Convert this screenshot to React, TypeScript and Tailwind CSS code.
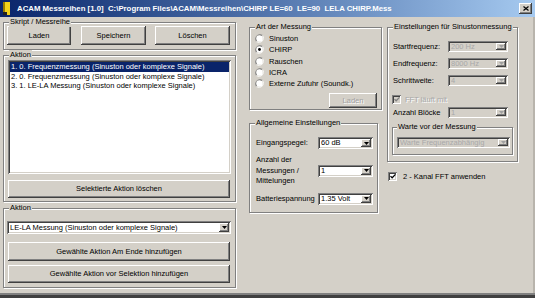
import React from "react";

const raised =
  "bg-[#d4d0c8] shadow-[inset_-1px_-1px_0_#404040,inset_1px_1px_0_#ffffff,inset_-2px_-2px_0_#808080]";
const sunken =
  "shadow-[inset_1px_1px_0_#808080,inset_-1px_-1px_0_#ffffff,inset_2px_2px_0_#404040,inset_-2px_-2px_0_#d4d0c8]";

function Btn({ label, className, disabled }: { label: string; className: string; disabled?: boolean }) {
  return (
    <div
      className={`${raised} flex items-center justify-center shrink-0 ${
        disabled ? "text-[#a0a0a0] [text-shadow:1px_1px_0_#fff]" : "text-black"
      } ${className}`}
    >
      {label}
    </div>
  );
}

function Group({
  label,
  className,
  children,
  labelLeft = "left-[5px]",
}: {
  label: string;
  className: string;
  children?: React.ReactNode;
  labelLeft?: string;
}) {
  return (
    <div
      className={`relative shrink-0 border border-[#808080] shadow-[inset_1px_1px_0_#ffffff,1px_1px_0_#ffffff] ${className}`}
    >
      <span className={`absolute ${labelLeft} top-[-6px] bg-[#d4d0c8] px-[1px] leading-[10px] whitespace-nowrap`}>
        {label}
      </span>
      {children}
    </div>
  );
}

function Arrow({ disabled }: { disabled?: boolean }) {
  return (
    <svg width="5" height="3" viewBox="0 0 5 3">
      <path d="M0 0h5L2.5 3z" fill={disabled ? "#a0a0a0" : "#000"} />
    </svg>
  );
}

function Combo({
  value,
  className,
  disabled,
}: {
  value: string;
  className: string;
  disabled?: boolean;
}) {
  return (
    <div
      className={`${sunken} shrink-0 flex items-center pl-[3px] pr-[2px] ${
        disabled ? "bg-[#d4d0c8] text-[#a8a8a8]" : "bg-white text-black"
      } ${className}`}
    >
      <span className="flex-1 whitespace-nowrap overflow-hidden leading-[10px]">{value}</span>
      <div className={`${raised} w-[10px] h-[calc(100%-4px)] flex items-center justify-center shrink-0`}>
        <Arrow disabled={disabled} />
      </div>
    </div>
  );
}

function Radio({ checked }: { checked?: boolean }) {
  return (
    <svg width="9" height="9" viewBox="0 0 12 12" className="shrink-0">
      <path d="M10.2 1.8A6 6 0 0 0 1.8 10.2" fill="none" stroke="#808080" strokeWidth="1" />
      <path d="M9.4 2.6A4.9 4.9 0 0 0 2.6 9.4" fill="none" stroke="#404040" strokeWidth="1" />
      <path d="M1.8 10.2A6 6 0 0 0 10.2 1.8" fill="none" stroke="#ffffff" strokeWidth="1" />
      <circle cx="6" cy="6" r="4.3" fill="#fff" />
      {checked && <circle cx="6" cy="6" r="1.9" fill="#000" />}
    </svg>
  );
}

function Check({ disabled }: { disabled?: boolean }) {
  return (
    <div
      className={`${sunken} w-[9px] h-[9px] shrink-0 flex items-center justify-center ${
        disabled ? "bg-[#d4d0c8]" : "bg-white"
      }`}
    >
      <svg width="6" height="5" viewBox="0 0 7 6">
        <path d="M0.5 2.5l2 2 4-4" fill="none" stroke={disabled ? "#808080" : "#000"} strokeWidth="1.5" />
      </svg>
    </div>
  );
}

export default function App() {
  const rows = [
    "1. 0. Frequenzmessung (Sinuston oder komplexe Signale)",
    "2. 0. Frequenzmessung (Sinuston oder komplexe Signale)",
    "3. 1. LE-LA Messung (Sinuston oder komplexe Signale)",
  ];
  return (
    <div className="w-[535px] h-[298px] overflow-hidden bg-[#d4d0c8] font-['Liberation_Sans',Arial,sans-serif] text-[7.5px] text-black flex flex-col">
      {/* Title bar */}
      <div className="h-[17px] shrink-0 flex items-center bg-gradient-to-r from-[#0a246a] to-[#a6caf0] pl-[3px] pr-[3px]">
        <svg width="8" height="13" viewBox="0 0 8 13" className="shrink-0">
          <rect x="0" y="0" width="7" height="13" fill="#f2d21a" />
          <rect x="0" y="0" width="2" height="13" fill="#9a7d00" />
          <rect x="0" y="10" width="4" height="3" fill="#222" />
        </svg>
        <span className="ml-[6px] text-white font-bold text-[7.8px] whitespace-nowrap leading-[10px] flex-1">
          ACAM Messreihen [1.0]&nbsp; C:\Program Files\ACAM\Messreihen\CHIRP LE=60&nbsp; LE=90&nbsp; LELA CHIRP.Mess
        </span>
        <div className={`${raised} w-[13px] h-[11px] flex items-center justify-center shrink-0`}>
          <svg width="6" height="5" viewBox="0 0 6 5">
            <path d="M0.5 0.5l5 4M5.5 0.5l-5 4" stroke="#000" strokeWidth="1.2" />
          </svg>
        </div>
      </div>

      {/* Body */}
      <div className="flex-1 flex flex-row border-b-[2px] border-b-[#808080] shadow-[inset_-2px_0_0_#b8b4ac]">
        {/* Left column */}
        <div className="ml-[3px] w-[233px] flex flex-col shrink-0">
          <Group label="Skript / Messreihe" className="mt-[5px] h-[28px]">
            <div className="flex flex-row pt-[3px] pl-[3px]">
              <Btn label="Laden" className="w-[64px] h-[19px]" />
              <Btn label="Speichern" className="ml-[10px] w-[65px] h-[19px]" />
              <Btn label="Löschen" className="ml-[9px] w-[75px] h-[19px]" />
            </div>
          </Group>

          <Group label="Aktion" className="mt-[5px] h-[147px]">
            <div className="flex flex-col pl-[4px] pt-[4px]">
              <div className={`${sunken} bg-white w-[223px] h-[114px] p-[2px]`}>
                {rows.map((r, i) => (
                  <div
                    key={i}
                    className={`h-[9.5px] leading-[9.5px] pl-[1px] whitespace-nowrap ${
                      i === 0 ? "bg-[#0a246a] text-white" : "text-black"
                    }`}
                  >
                    {r}
                  </div>
                ))}
              </div>
              <Btn label="Selektierte Aktion löschen" className="mt-[6px] w-[222px] h-[18px]" />
            </div>
          </Group>

          <Group label="Aktion" className="mt-[6px] h-[80px]">
            <div className="flex flex-col pl-[3px] pt-[12px]">
              <Combo value="LE-LA Messung (Sinuston oder komplexe Signale)" className="w-[224px] h-[13px]" />
              <Btn label="Gewählte Aktion Am Ende hinzufügen" className="mt-[8px] ml-[1px] w-[222px] h-[19px]" />
              <Btn label="Gewählte Aktion vor Selektion hinzufügen" className="mt-[4px] ml-[1px] w-[222px] h-[18px]" />
            </div>
          </Group>
        </div>

        {/* Middle column */}
        <div className="ml-[13px] w-[133px] flex flex-col shrink-0">
          <Group label="Art der Messung" className="mt-[10px] h-[83px] w-[133px]">
            <div className="flex flex-col pt-[5px] pl-[5px]">
              {["Sinuston", "CHIRP", "Rauschen", "ICRA", "Externe Zufuhr (Soundk.)"].map((t, i) => (
                <div key={t} className="h-[11.25px] flex items-center">
                  <Radio checked={i === 1} />
                  <span className="ml-[5px] whitespace-nowrap">{t}</span>
                </div>
              ))}
              <div className="flex justify-end pr-[4px] mt-[4px]">
                <Btn label="Laden" disabled className="w-[48px] h-[15px]" />
              </div>
            </div>
          </Group>

          <Group label="Allgemeine Einstellungen" className="mt-[13px] h-[90px] w-[129px]">
            <div className="flex flex-col pl-[6px] pt-[13px]">
              <div className="flex items-center h-[12px]">
                <span className="w-[62px] whitespace-nowrap">Eingangspegel:</span>
                <Combo value="60 dB" className="w-[55px] h-[12px]" />
              </div>
              <div className="flex items-center mt-[6px]">
                <span className="w-[62px] leading-[10.5px]">
                  Anzahl der
                  <br />
                  Messungen /
                  <br />
                  Mittelungen
                </span>
                <Combo value="1" className="w-[55px] h-[12px]" />
              </div>
              <div className="flex items-center h-[12px] mt-[6px]">
                <span className="w-[62px] whitespace-nowrap">Batteriespannung</span>
                <Combo value="1.35 Volt" className="w-[55px] h-[12px]" />
              </div>
            </div>
          </Group>
        </div>

        {/* Right column */}
        <div className="ml-[5px] w-[131px] flex flex-col shrink-0">
          <Group label="Einstellungen für Sinustonmessung" className="mt-[10px] h-[135px] w-[131px]">
            <div className="flex flex-col pl-[5px] pt-[13px]">
              <div className="flex items-center h-[11px]">
                <span className="w-[55px] whitespace-nowrap">Startfrequenz:</span>
                <Combo value="200 Hz" disabled className="w-[60px] h-[11px]" />
              </div>
              <div className="flex items-center h-[11px] mt-[6px]">
                <span className="w-[55px] whitespace-nowrap">Endfrequenz:</span>
                <Combo value="8000 Hz" disabled className="w-[60px] h-[11px]" />
              </div>
              <div className="flex items-center h-[11px] mt-[6px]">
                <span className="w-[55px] whitespace-nowrap">Schrittweite:</span>
                <Combo value="4" disabled className="w-[60px] h-[11px]" />
              </div>
              <div className="flex items-center h-[9px] mt-[9px] -ml-[1px]">
                <Check disabled />
                <span className="ml-[4px] text-[#a8a8a8] [text-shadow:1px_1px_0_#fff] whitespace-nowrap">FFT läuft mit</span>
              </div>
              <div className="flex items-center h-[11px] mt-[3px]">
                <span className="w-[55px] whitespace-nowrap">Anzahl Blöcke</span>
                <Combo value="1" disabled className="w-[60px] h-[11px]" />
              </div>
              <Group label="Warte vor der Messung" className="mt-[9px] -ml-[1px] h-[28px] w-[121px]" labelLeft="left-[4px]">
                <div className="pl-[4px] pt-[9px]">
                  <Combo value="Warte Frequenzabhängig" disabled className="w-[113px] h-[11px]" />
                </div>
              </Group>
            </div>
          </Group>
          <div className="flex items-center h-[9px] mt-[10px] ml-[1px]">
            <Check />
            <span className="ml-[6px] whitespace-nowrap">2 - Kanal FFT anwenden</span>
          </div>
        </div>
      </div>
      <div className="h-[3px] shrink-0 bg-[#404040]" />
    </div>
  );
}
